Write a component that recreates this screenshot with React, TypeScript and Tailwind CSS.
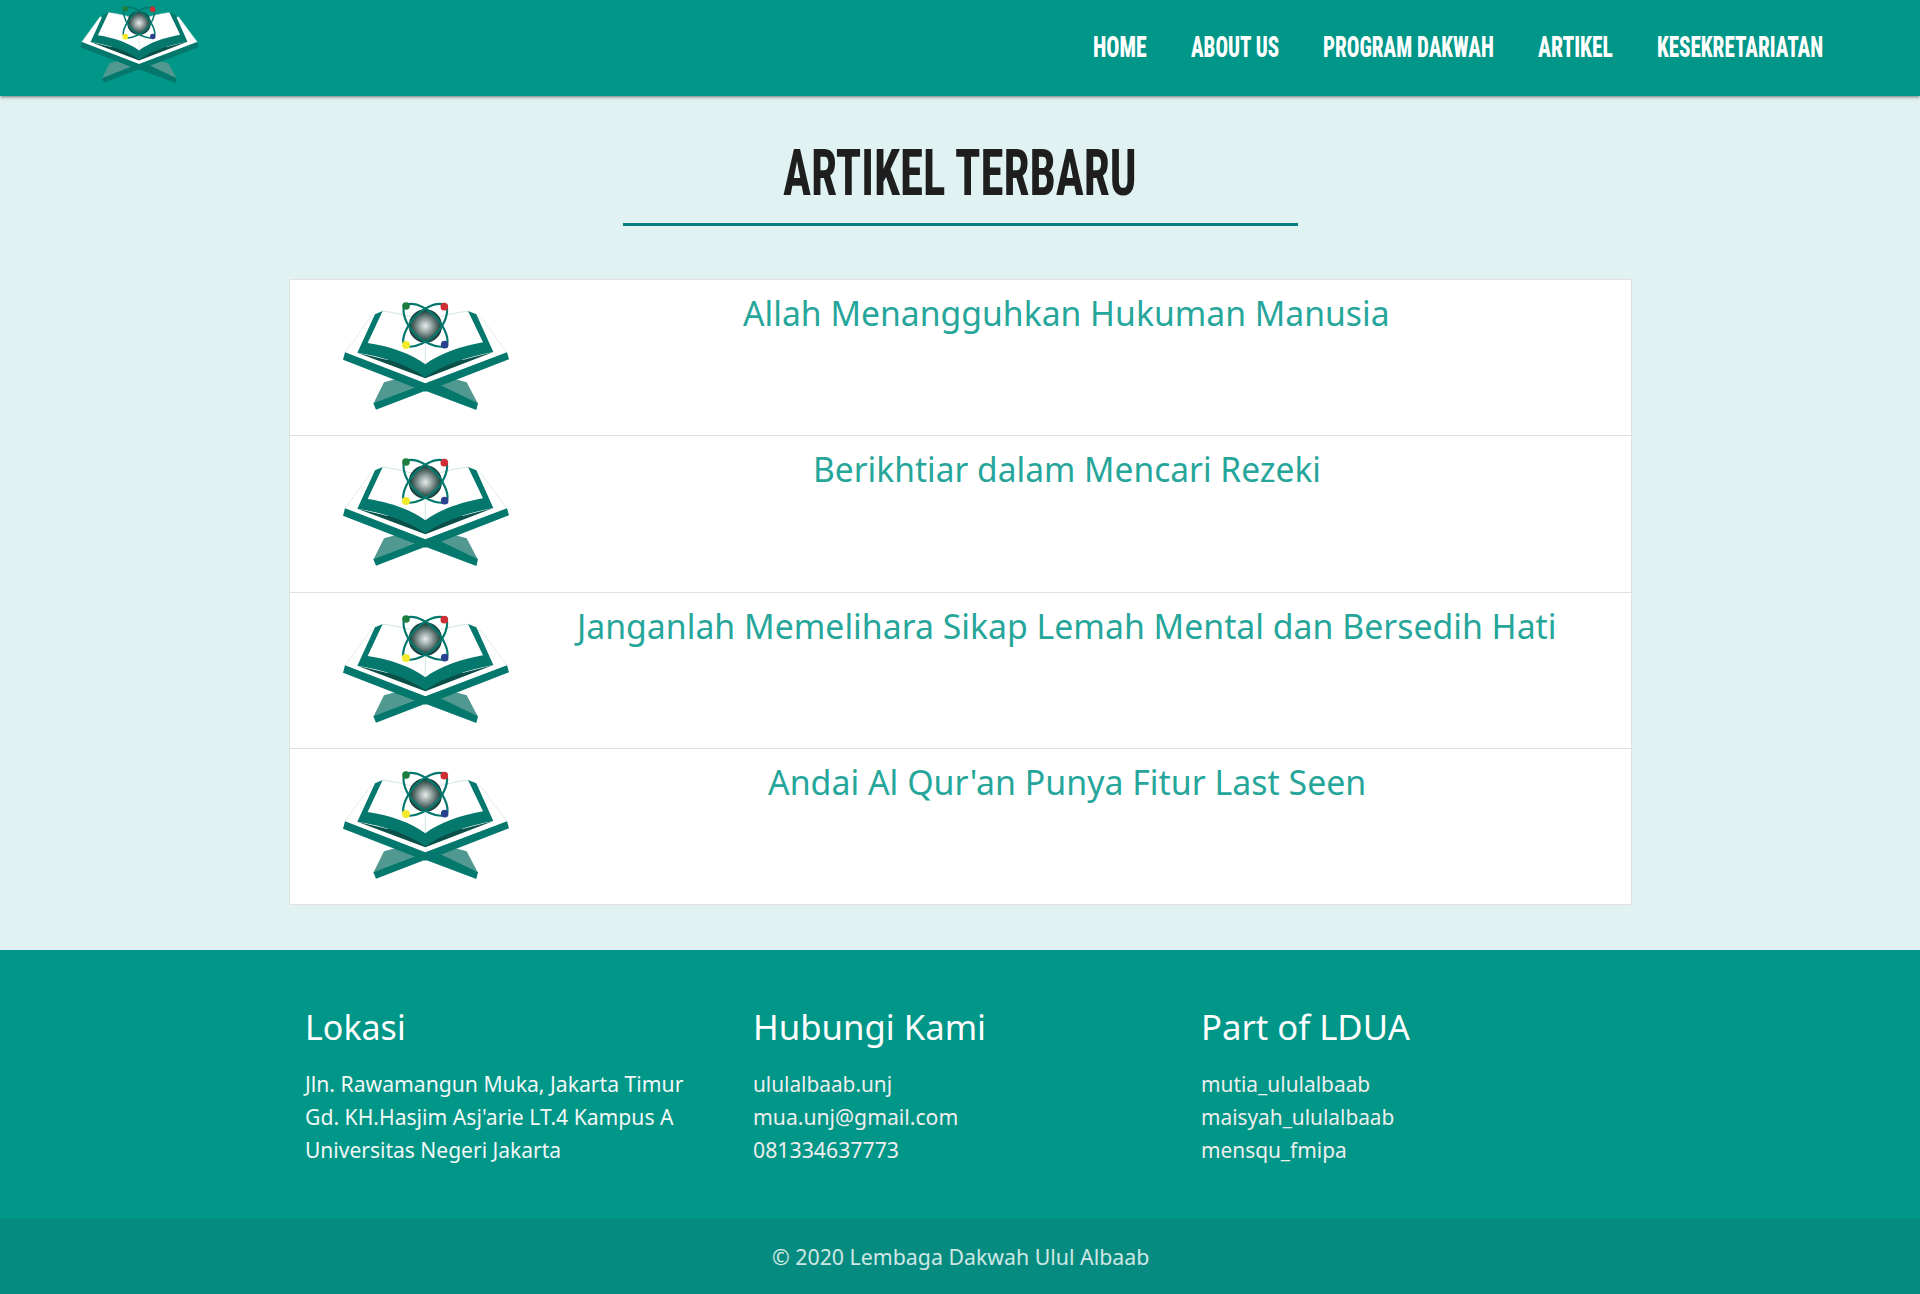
import { useLayoutEffect, useRef } from "react";

type FitProps = { text: string; width: number; className?: string };

// Sets a line of text to an exact width by scaling it horizontally.
function Fit({ text, width, className = "" }: FitProps) {
  const ref = useRef<HTMLSpanElement>(null);
  useLayoutEffect(() => {
    const el = ref.current;
    if (el) el.style.transform = `scaleX(${width / el.offsetWidth})`;
  }, [text, width]);
  return (
    <span className="block whitespace-nowrap" style={{ width }}>
      <span ref={ref} className={`inline-block origin-left align-top ${className}`}>
        {text}
      </span>
    </span>
  );
}

function Logo({ className, id }: { className: string; id: string }) {
  return (
    <svg viewBox="69 97 498 324" className={className} aria-label="Ulul Albaab">
      <defs>
        <radialGradient id={id}>
          <stop offset="0" stopColor="#e8eceb" />
          <stop offset="0.3" stopColor="#a9b5b3" />
          <stop offset="0.7" stopColor="#4f6663" />
          <stop offset="1" stopColor="#0f3a36" />
        </radialGradient>
      </defs>
      <path d="M192 338 L228 328 L316 352 L404 328 L440 338 L474 402 L350 352 L284 352 L160 402Z" fill="#519990" />
      <path d="M160 401 L300 346 L360 346 L474 401 L469 421 L316 363 L168 420Z" fill="#04786d" />
      <path d="M152 142 L75 249 L316 342 L561 249 L482 142 L316 215Z" fill="#fff" stroke="#d3e6e3" strokeWidth="2" />
      <path d="M75 248 L316 341 L561 248 L567 269 L316 366 L69 270Z" fill="#04786d" />
      <path d="M79 247 L110 225 L316 310 L522 225 L558 247 L316 339Z" fill="#fff" />
      <path d="M112 249 L316 326 L520 247 L430 270 L200 270Z" fill="#0a5048" />
      <path d="M188 124 L165 134 L112 249 C190 262 262 284 316 323 C370 284 442 262 520 247 L469 134 L444 124 L316 230Z" fill="#04786d" />
      <path d="M188 124 C235 131 278 140 316 158 C354 140 397 131 444 124 L489 218 C420 230 355 254 316 284 C277 254 212 230 143 220Z" fill="#fff" />
      <path d="M188 124 C235 131 278 140 316 158 C354 140 397 131 444 124 M316 220 V283" fill="none" stroke="#b5d3cf" strokeWidth="1.8" />
      <circle cx="316" cy="169" r="50" fill={`url(#${id})`} />
      <g fill="none" stroke="#04786d" strokeWidth="6.5">
        <path d="M256 106 C285 94 332 118 361 159 C385 195 387 222 376 229 C350 238 306 218 276 183 C249 149 246 115 256 106Z" />
        <path d="M376 106 C347 94 300 118 271 159 C247 195 245 222 256 229 C282 238 326 218 356 183 C383 149 386 115 376 106Z" />
      </g>
      <circle cx="258" cy="109" r="11.5" fill="#1b7e3f" />
      <circle cx="373" cy="111" r="11.5" fill="#cc2e33" />
      <circle cx="258" cy="226" r="12" fill="#f3ea2c" />
      <circle cx="374" cy="225" r="11.5" fill="#2a428e" />
    </svg>
  );
}

const nav = [
  { text: "HOME", width: 54 },
  { text: "ABOUT US", width: 88 },
  { text: "PROGRAM DAKWAH", width: 171 },
  { text: "ARTIKEL", width: 75 },
  { text: "KESEKRETARIATAN", width: 166 },
];

const articles = [
  { text: "Allah Menangguhkan Hukuman Manusia", width: 647 },
  { text: "Berikhtiar dalam Mencari Rezeki", width: 508 },
  { text: "Janganlah Memelihara Sikap Lemah Mental dan Bersedih Hati", width: 980 },
  { text: "Andai Al Qur'an Punya Fitur Last Seen", width: 598 },
];

const columns = [
  {
    title: { text: "Lokasi", width: 101 },
    tone: "text-[#f2f8f7]",
    lines: [
      { text: "Jln. Rawamangun Muka, Jakarta Timur", width: 378 },
      { text: "Gd. KH.Hasjim Asj'arie LT.4 Kampus A", width: 369 },
      { text: "Universitas Negeri Jakarta", width: 256 },
    ],
  },
  {
    title: { text: "Hubungi Kami", width: 233 },
    tone: "text-[#eeeeee]",
    lines: [
      { text: "ululalbaab.unj", width: 139 },
      { text: "mua.unj@gmail.com", width: 205 },
      { text: "081334637773", width: 146 },
    ],
  },
  {
    title: { text: "Part of LDUA", width: 209 },
    tone: "text-[#eeeeee]",
    lines: [
      { text: "mutia_ululalbaab", width: 169 },
      { text: "maisyah_ululalbaab", width: 193 },
      { text: "mensqu_fmipa", width: 146 },
    ],
  },
];

export default function App() {
  return (
    <div className="flex h-[1294px] w-[1920px] flex-col overflow-hidden bg-[#e0f2f1] font-['Noto_Sans',sans-serif]">
      <header className="z-10 flex h-24 shrink-0 justify-between bg-[#009688] pr-[97px] pl-[80px] shadow-[0_2px_2px_0_rgba(0,0,0,0.14),0_3px_1px_-2px_rgba(0,0,0,0.12),0_1px_5px_0_rgba(0,0,0,0.2)]">
        <Logo id="orb-nav" className="mt-[5.5px] h-[77px] w-[119px]" />
        <nav className="flex gap-[44px] pt-[27px] font-['Roboto',sans-serif] text-[29.5px] leading-[41px] font-extrabold text-white">
          {nav.map((n) => (
            <a key={n.text} className="block">
              <Fit {...n} className="font-stretch-condensed" />
            </a>
          ))}
        </nav>
      </header>

      <main className="flex h-[854px] shrink-0 flex-col items-center">
        <h1 className="mt-[37px] font-['Roboto',sans-serif] text-[65px] leading-[80px] font-bold text-[#1e1e1e]">
          <Fit text="ARTIKEL TERBARU" width={354} className="font-stretch-condensed" />
        </h1>
        <div className="mt-[10px] h-[3px] w-[675px] bg-[#008080]" />
        <ul className="mt-[53px] w-[1343px] rounded-[2px] border border-b-0 border-[#e0e0e0] bg-white">
          {articles.map((a, i) => (
            <li key={a.text} className="flex h-[156.25px] border-b border-[#e0e0e0]">
              <Logo id={`orb-${i}`} className="mt-[22px] ml-[53px] h-[108px] w-[166px] shrink-0" />
              <div className="ml-[30px] flex w-[1056px] justify-center pt-[9px] text-[35px] leading-[48px] text-[#26a69a]">
                <Fit {...a} />
              </div>
            </li>
          ))}
        </ul>
      </main>

      <footer className="flex grow flex-col bg-[#009688]">
        <div className="flex h-[269px] shrink-0 pt-[53px] pl-[305px]">
          {columns.map((c) => (
            <section key={c.title.text} className="w-[448px]">
              <h2 className="mb-[16px] text-[35px] leading-[48px] text-white">
                <Fit {...c.title} />
              </h2>
              <ul className={`text-[22px] leading-[33px] ${c.tone}`}>
                {c.lines.map((l) => (
                  <li key={l.text}>
                    <Fit {...l} />
                  </li>
                ))}
              </ul>
            </section>
          ))}
        </div>
        <div className="flex grow justify-center bg-[rgba(51,51,51,0.1)] pt-[21px] text-[22px] leading-[33px] text-white/80">
          <Fit text="© 2020 Lembaga Dakwah Ulul Albaab" width={377} />
        </div>
      </footer>
    </div>
  );
}
